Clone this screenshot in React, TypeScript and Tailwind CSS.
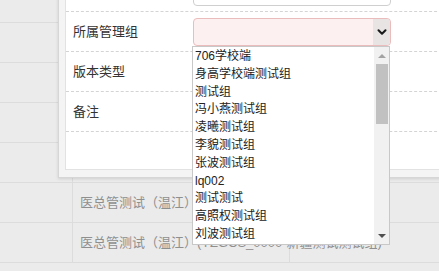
import { ChevronDown } from 'lucide-react'

const groups = [
  '706学校端',
  '身高学校端测试组',
  '测试组',
  '冯小燕测试组',
  '凌曦测试组',
  '李貌测试组',
  '张波测试组',
  'lq002',
  '测试测试',
  '高照权测试组',
  '刘波测试组',
]

const bgRows = [
  '',
  '',
  '',
  '',
  '',
  '医总管测试（温江）(',
  '医总管测试（温江）(YZGCS_0000-新疆测试测试组)',
]

function FormRow({ label, children }: { label: string; children?: React.ReactNode }) {
  return (
    <div className="flex items-center h-10 shrink-0 border-b border-dashed border-[#d4d4d4]">
      <div className="w-[127px] pl-[7px] text-[13px] text-[#333]">{label}</div>
      <div className="flex-1">{children}</div>
    </div>
  )
}

export default function App() {
  return (
    <div
      className="relative w-[439px] h-[271px] overflow-hidden bg-[#ebebeb]"
      style={{ fontFamily: '"Liberation Sans", "Noto Sans CJK SC", sans-serif' }}
    >
      {/* table behind the dialog */}
      <div className="-mt-[17px] flex flex-col">
        {bgRows.map((t, i) => (
          <div key={i} className="flex h-10 border-b border-[#dcdcdc]">
            <div className="w-[73px] border-r border-[#dcdcdc]" />
            <div className="w-[217px] border-r border-[#dcdcdc] pl-[7px] flex items-center text-[13px] text-[#8f8f8f] whitespace-nowrap">
              {t}
            </div>
            <div className="flex-1" />
          </div>
        ))}
      </div>

      {/* dialog */}
      <div className="absolute left-[58px] -top-[30px] -right-[10px] h-[208px] bg-[#f4f4f4] border border-[#d6d6d6] pl-[6px] pb-[7px] shadow-[0_1px_3px_rgba(0,0,0,0.12)]">
        <div className="h-full bg-white border border-[#e2e2e2] flex flex-col">
          <FormRow label="">
            <div className="w-[198px] h-[28px] border border-[#cfcfcf] rounded bg-white" />
          </FormRow>
          <FormRow label="所属管理组">
            <div className="w-[198px] h-[28px] border border-[#ebbcbc] rounded bg-[#fdf0f0] flex justify-end">
              <div className="w-[17px] h-full bg-[#e9e4e4] rounded-r flex items-center justify-center">
                <ChevronDown size={14} strokeWidth={3.5} className="text-[#1a1a1a]" />
              </div>
            </div>
          </FormRow>
          <FormRow label="版本类型" />
          <FormRow label="备注" />
        </div>
      </div>

      {/* open select list */}
      <div className="absolute left-[192px] top-[46px] w-[198px] h-[199px] bg-white border border-[#c8c8c8] flex">
        <div className="flex-1 pl-[2px] pt-[1px] overflow-hidden">
          {groups.map((g) => (
            <div key={g} className="h-[17.8px] leading-[17.8px] text-[12px] text-[#222] whitespace-nowrap">
              {g}
            </div>
          ))}
        </div>
        <div className="w-[15px] bg-[#f1f1f1] flex flex-col items-center">
          <div className="h-[17px] flex items-center justify-center">
            <div className="w-0 h-0 border-l-[4px] border-r-[4px] border-b-[4px] border-l-transparent border-r-transparent border-b-[#a3a3a3]" />
          </div>
          <div className="w-[12px] h-[60px] bg-[#c1c1c1]" />
          <div className="flex-1" />
          <div className="h-[17px] flex items-center justify-center">
            <div className="w-0 h-0 border-l-[4px] border-r-[4px] border-t-[4px] border-l-transparent border-r-transparent border-t-[#505050]" />
          </div>
        </div>
      </div>
    </div>
  )
}
